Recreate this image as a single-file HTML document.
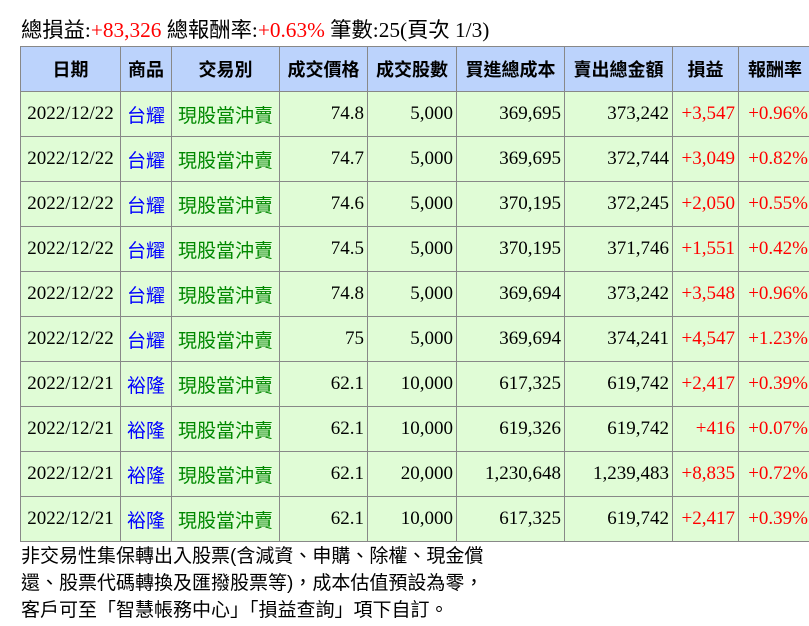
<!DOCTYPE html>
<html><head><meta charset="utf-8"><style>
body{margin:0;background:#fff;width:809px;height:626px;overflow:hidden;font-family:"Liberation Serif","Noto Sans CJK TC",serif;}
.t{position:absolute;left:21px;top:13px;font-size:21.3px;white-space:nowrap;color:#000}
.r{color:#f00}
table{position:absolute;left:20px;top:46px;border-collapse:collapse;table-layout:fixed;width:791px;font-size:19px}
td,th{border:1px solid #888;height:44px;padding:0 3px;white-space:nowrap;overflow:visible}
th{background:#bcd3fc;font-family:"Liberation Sans","Noto Sans CJK TC",sans-serif;font-weight:bold;font-size:18px}
td{background:#e0fcd6;text-align:right}
td.c{text-align:center}
.b{color:#00f;font-family:"Liberation Sans","Noto Sans CJK TC",sans-serif;text-align:center}
.g{color:#080;font-family:"Liberation Sans","Noto Sans CJK TC",sans-serif;text-align:center}
.n{position:absolute;left:21px;top:543px;font-size:19px;line-height:27px;font-family:"Liberation Sans","Noto Sans CJK TC",sans-serif;white-space:nowrap}
</style></head><body>
<div class="t">總損益:<span class="r">+83,326</span> 總報酬率:<span class="r">+0.63%</span> 筆數:25(頁次 1/3)</div>
<table>
<colgroup><col style="width:100px"><col style="width:51px"><col style="width:108px"><col style="width:88px"><col style="width:89px"><col style="width:108px"><col style="width:108px"><col style="width:66px"><col style="width:73px"></colgroup>
<tr><th>日期</th><th>商品</th><th>交易別</th><th>成交價格</th><th>成交股數</th><th>買進總成本</th><th>賣出總金額</th><th>損益</th><th>報酬率</th></tr>
<tr><td class="c">2022/12/22</td><td class="b">台耀</td><td class="g">現股當沖賣</td><td>74.8</td><td>5,000</td><td>369,695</td><td>373,242</td><td class="r">+3,547</td><td class="r">+0.96%</td></tr>
<tr><td class="c">2022/12/22</td><td class="b">台耀</td><td class="g">現股當沖賣</td><td>74.7</td><td>5,000</td><td>369,695</td><td>372,744</td><td class="r">+3,049</td><td class="r">+0.82%</td></tr>
<tr><td class="c">2022/12/22</td><td class="b">台耀</td><td class="g">現股當沖賣</td><td>74.6</td><td>5,000</td><td>370,195</td><td>372,245</td><td class="r">+2,050</td><td class="r">+0.55%</td></tr>
<tr><td class="c">2022/12/22</td><td class="b">台耀</td><td class="g">現股當沖賣</td><td>74.5</td><td>5,000</td><td>370,195</td><td>371,746</td><td class="r">+1,551</td><td class="r">+0.42%</td></tr>
<tr><td class="c">2022/12/22</td><td class="b">台耀</td><td class="g">現股當沖賣</td><td>74.8</td><td>5,000</td><td>369,694</td><td>373,242</td><td class="r">+3,548</td><td class="r">+0.96%</td></tr>
<tr><td class="c">2022/12/22</td><td class="b">台耀</td><td class="g">現股當沖賣</td><td>75</td><td>5,000</td><td>369,694</td><td>374,241</td><td class="r">+4,547</td><td class="r">+1.23%</td></tr>
<tr><td class="c">2022/12/21</td><td class="b">裕隆</td><td class="g">現股當沖賣</td><td>62.1</td><td>10,000</td><td>617,325</td><td>619,742</td><td class="r">+2,417</td><td class="r">+0.39%</td></tr>
<tr><td class="c">2022/12/21</td><td class="b">裕隆</td><td class="g">現股當沖賣</td><td>62.1</td><td>10,000</td><td>619,326</td><td>619,742</td><td class="r">+416</td><td class="r">+0.07%</td></tr>
<tr><td class="c">2022/12/21</td><td class="b">裕隆</td><td class="g">現股當沖賣</td><td>62.1</td><td>20,000</td><td>1,230,648</td><td>1,239,483</td><td class="r">+8,835</td><td class="r">+0.72%</td></tr>
<tr><td class="c">2022/12/21</td><td class="b">裕隆</td><td class="g">現股當沖賣</td><td>62.1</td><td>10,000</td><td>617,325</td><td>619,742</td><td class="r">+2,417</td><td class="r">+0.39%</td></tr>
</table>
<div class="n">非交易性集保轉出入股票(含減資、申購、除權、現金償<br>還、股票代碼轉換及匯撥股票等)，成本估值預設為零，<br>客戶可至「智慧帳務中心」「損益查詢」項下自訂。</div>
</body></html>
